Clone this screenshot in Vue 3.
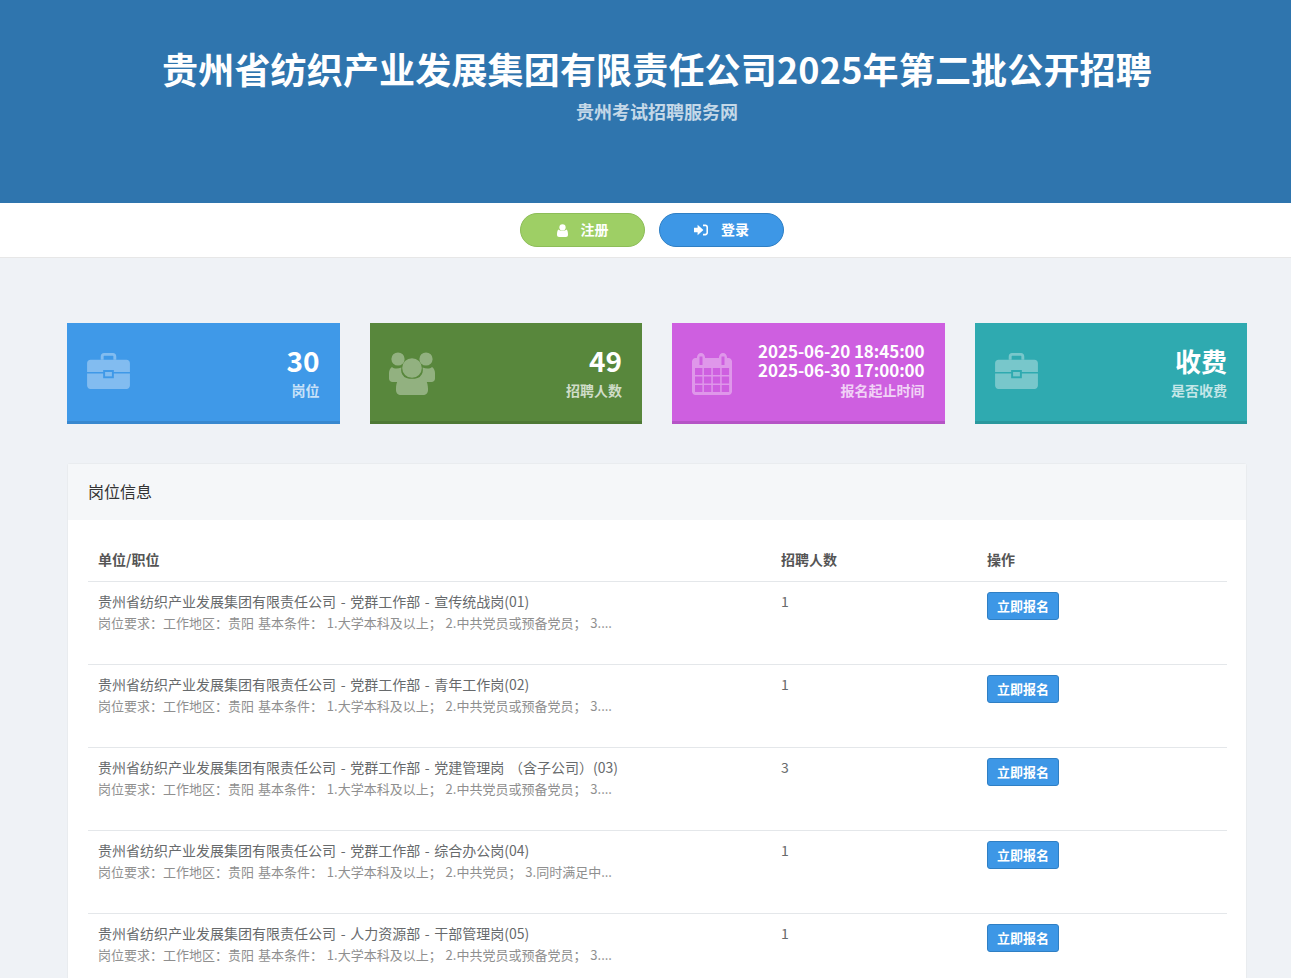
<script setup>
const stats = [
  { color: 'blue', icon: 'case', lines: ['30'], label: '岗位' },
  { color: 'green', icon: 'users', lines: ['49'], label: '招聘人数' },
  { color: 'purple', icon: 'calendar', lines: ['2025-06-20 18:45:00', '2025-06-30 17:00:00'], label: '报名起止时间' },
  { color: 'teal', icon: 'case', lines: ['收费'], label: '是否收费', cjk: true }
]

// full-width punctuation, the reference uses it throughout
const colon = '\uFF1A'
const semi = '\uFF1B'
const company = '贵州省纺织产业发展集团有限责任公司'
const reqHead = `岗位要求${colon}工作地区${colon}贵阳 基本条件${colon} 1.大学本科及以上${semi} `
const baseReq = `${reqHead}2.中共党员或预备党员${semi} 3....`

const jobs = [
  { name: company + ' - 党群工作部 - 宣传统战岗(01)', req: baseReq, count: 1 },
  { name: company + ' - 党群工作部 - 青年工作岗(02)', req: baseReq, count: 1 },
  { name: company + ' - 党群工作部 - 党建管理岗 \uFF08含子公司\uFF09(03)', req: baseReq, count: 3 },
  { name: company + ' - 党群工作部 - 综合办公岗(04)', req: `${reqHead}2.中共党员${semi} 3.同时满足中...`, count: 1 },
  { name: company + ' - 人力资源部 - 干部管理岗(05)', req: baseReq, count: 1 }
]
</script>

<template>
  <div class="page">
    <header class="banner">
      <h1>贵州省纺织产业发展集团有限责任公司2025年第二批公开招聘</h1>
      <p>贵州考试招聘服务网</p>
    </header>

    <nav class="topnav">
      <a class="pill pill-green">
        <svg viewBox="0 0 12 14" width="11" height="13">
          <circle cx="6" cy="3.6" r="3.4" fill="#fff" />
          <path d="M1.6 5.8C3 7.6 9 7.6 10.4 5.8 11.6 6.6 12 9 12 11.6 12 13.2 11 14 9.8 14H2.2C1 14 0 13.2 0 11.6 0 9 .4 6.6 1.6 5.8Z" fill="#fff" />
        </svg>
        <span>注册</span>
      </a>
      <a class="pill pill-blue">
        <svg viewBox="0 0 14 12" width="14" height="12">
          <path d="M0 3.8H3.6V.8L9.4 6 3.6 11.2V8.2H0Z" fill="#fff" />
          <path d="M9 .6H11.4C12.9 .6 14 1.7 14 3.2V8.8C14 10.3 12.9 11.4 11.4 11.4H9V9.8H11.2C11.9 9.8 12.4 9.3 12.4 8.6V3.4C12.4 2.7 11.9 2.2 11.2 2.2H9Z" fill="#fff" />
        </svg>
        <span>登录</span>
      </a>
    </nav>

    <main class="content">
      <section class="stats">
        <div v-for="s in stats" :key="s.label" :class="['stat', s.color]">
          <svg v-if="s.icon === 'case'" class="stat-icon icon-case" viewBox="0 0 44 37" width="43" height="36">
            <path d="M14 7V3.5C14 1.6 15.4 0 17.4 0H26.6C28.6 0 30 1.6 30 3.5V7H27V3.4C27 3.1 26.8 2.9 26.5 2.9H17.5C17.2 2.9 17 3.1 17 3.4V7Z" />
            <path d="M3.5 7H40.5C42.5 7 44 8.5 44 10.5V19.5H27.5V17.5H16.5V19.5H0V10.5C0 8.5 1.5 7 3.5 7Z" />
            <path d="M0 21H16.5V26H27.5V21H44V33.5C44 35.5 42.5 37 40.5 37H3.5C1.5 37 0 35.5 0 33.5Z" />
            <path d="M18.5 19.5H25.5V24H18.5Z" />
          </svg>
          <svg v-else-if="s.icon === 'users'" class="stat-icon icon-users" viewBox="0 0 46 43" width="46" height="43">
            <circle cx="9" cy="7" r="6.6" />
            <circle cx="37" cy="7" r="6.6" />
            <path d="M3 15C5 17 9 17 12.4 15.4 11.6 19 12.6 22.4 15 24.6 12 25.6 10.4 27.4 9.6 30H3.5C1.5 30 0 28.6 0 26.6V21C0 18.6 1.2 16 3 15Z" />
            <path d="M43 15C41 17 37 17 33.6 15.4 34.4 19 33.4 22.4 31 24.6 34 25.6 35.6 27.4 36.4 30H42.5C44.5 30 46 28.6 46 26.6V21C46 18.6 44.8 16 43 15Z" />
            <circle cx="23" cy="16" r="9.8" />
            <path d="M13.6 23.4C17 28 29 28 32.4 23.4 36 25.4 39 30 39 36.4V38C39 41 37 43 34 43H12C9 43 7 41 7 38V36.4C7 30 10 25.4 13.6 23.4Z" />
          </svg>
          <svg v-else class="stat-icon icon-calendar" viewBox="0 0 40 42" width="40" height="42">
            <path fill-rule="evenodd" d="M3.5 5H5V4.5C5 2 6.8 0 9 0S13 2 13 4.5V5H27V4.5C27 2 28.8 0 31 0S35 2 35 4.5V5H36.5C38.4 5 40 6.6 40 8.5V38.5C40 40.4 38.4 42 36.5 42H3.5C1.6 42 0 40.4 0 38.5V8.5C0 6.6 1.6 5 3.5 5ZM7.5 3.5V12H10.5V3.5ZM29.5 3.5V12H32.5V3.5ZM3 15V22H10.4V15ZM11.9 15V22H19.3V15ZM20.8 15V22H28.2V15ZM29.7 15V22H37.1V15ZM3 23.5V30.5H10.4V23.5ZM11.9 23.5V30.5H19.3V23.5ZM20.8 23.5V30.5H28.2V23.5ZM29.7 23.5V30.5H37.1V23.5ZM3 32V39H10.4V32ZM11.9 32V39H19.3V32ZM20.8 32V39H28.2V32ZM29.7 32V39H37.1V32Z" />
          </svg>
          <div class="stat-text">
            <div :class="['stat-value', { small: s.lines.length > 1, cjk: s.cjk }]">
              <div v-for="line in s.lines" :key="line">{{ line }}</div>
            </div>
            <div class="stat-label">{{ s.label }}</div>
          </div>
        </div>
      </section>

      <section class="panel">
        <div class="panel-title">岗位信息</div>
        <div class="panel-body">
          <table>
            <colgroup>
              <col class="col-name" />
              <col class="col-count" />
              <col />
            </colgroup>
            <thead>
              <tr>
                <th>单位/职位</th>
                <th>招聘人数</th>
                <th>操作</th>
              </tr>
            </thead>
            <tbody>
              <tr v-for="job in jobs" :key="job.name">
                <td>
                  <div class="job-name">{{ job.name }}</div>
                  <div class="job-req">{{ job.req }}</div>
                </td>
                <td>{{ job.count }}</td>
                <td><button class="apply">立即报名</button></td>
              </tr>
            </tbody>
          </table>
        </div>
      </section>
    </main>
  </div>
</template>

<style scoped>
.page {
  height: 978px;
  overflow: hidden;
  background: #eff2f6;
  font-family: "Noto Sans CJK SC", "Noto Sans", sans-serif;
  color: #676a6c;
}

.banner {
  height: 203px;
  box-sizing: border-box;
  padding: 42px 0 0 23px;
  background: #2f75ae;
  text-align: center;
  color: #fff;
}

.banner h1 {
  margin: 0;
  font-size: 36px;
  line-height: 52px;
  font-weight: 700;
  letter-spacing: 0.17px;
}

.banner p {
  margin: 4px 0 0;
  font-size: 18px;
  line-height: 26px;
  font-weight: 700;
  color: rgba(255, 255, 255, 0.72);
}

.topnav {
  height: 54px;
  padding-left: 13px;
  display: flex;
  align-items: center;
  justify-content: center;
  gap: 14px;
  background: #fff;
  border-bottom: 1px solid #e7e7e7;
}

.pill {
  width: 125px;
  height: 34px;
  box-sizing: border-box;
  padding-bottom: 2px;
  display: flex;
  align-items: center;
  justify-content: center;
  gap: 13px;
  border-radius: 17px;
  border: 1px solid;
  color: #fff;
  font-size: 14px;
  font-weight: 700;
}

.pill svg {
  margin-top: 2px;
}

.pill-green {
  background: #9ecf65;
  border-color: #8dbd58;
}

.pill-blue {
  background: #3d97e6;
  border-color: #2f7fc4;
}

.content {
  padding: 65px 44px 0 67px;
}

.stats {
  display: grid;
  grid-template-columns: repeat(4, 1fr);
  gap: 30px;
}

.stat {
  height: 101px;
  box-sizing: border-box;
  padding: 0 20px;
  display: flex;
  align-items: center;
  justify-content: space-between;
  color: #fff;
  border-bottom: 3px solid;
}

.stat.blue { background: #3f99e8; border-color: #3888cf; }
.stat.green { background: #58873c; border-color: #4e7935; }
.stat.purple { background: #ce5fe0; border-color: #b554c6; }
.stat.teal { background: #2faab0; border-color: #2a989d; }

.stat-icon {
  fill: #fff;
  opacity: 0.35;
  flex-shrink: 0;
}

.icon-case {
  margin-bottom: 2px;
}

.icon-users {
  margin-left: -1px;
  margin-top: 2px;
}

.icon-calendar {
  margin-top: 4px;
}

.stat-text {
  text-align: right;
}

.stat-value {
  font-size: 28px;
  line-height: 32px;
  padding-bottom: 4px;
  font-weight: 700;
}

.stat-value.cjk {
  font-size: 26px;
  line-height: 34px;
  padding-bottom: 2px;
}

.stat-value.small {
  margin: -3px 0 1px;
  padding-bottom: 0;
  font-size: 17px;
  line-height: 19px;
  letter-spacing: -0.08px;
}

.stat-label {
  font-size: 14px;
  line-height: 20px;
  font-weight: 700;
  color: rgba(255, 255, 255, 0.72);
}

.panel {
  margin-top: 39px;
  background: #fff;
  border: 1px solid #e9ecef;
  border-radius: 3px;
}

.panel-title {
  height: 56px;
  box-sizing: border-box;
  padding: 0 20px 2px;
  display: flex;
  align-items: center;
  background: #f5f7f9;
  font-size: 16px;
  color: #333;
}

.panel-body {
  padding: 20px 19px 20px 20px;
}

table {
  width: 100%;
  table-layout: fixed;
  border-collapse: collapse;
  font-size: 14px;
}

.col-name { width: 683px; }
.col-count { width: 206px; }

th {
  height: 41px;
  box-sizing: border-box;
  padding: 0 10px 3px;
  text-align: left;
  font-weight: 700;
  color: #555;
  border-bottom: 1px solid #e4e7ea;
}

td {
  height: 83px;
  box-sizing: border-box;
  padding: 9px 10px;
  vertical-align: top;
  line-height: 20px;
  border-bottom: 1px solid #e4e7ea;
}

.job-name {
  word-spacing: 1.5px;
}

.job-req {
  margin-top: 2px;
  font-size: 13px;
  color: #8f8f8f;
  white-space: pre;
  word-spacing: 1px;
}

.apply {
  height: 28px;
  margin-top: 1px;
  padding: 0 9px;
  border: 1px solid #2f7fc4;
  border-radius: 3px;
  background: #3d97e6;
  color: #fff;
  font-family: inherit;
  font-size: 13px;
  font-weight: 700;
  line-height: 1;
}
</style>
